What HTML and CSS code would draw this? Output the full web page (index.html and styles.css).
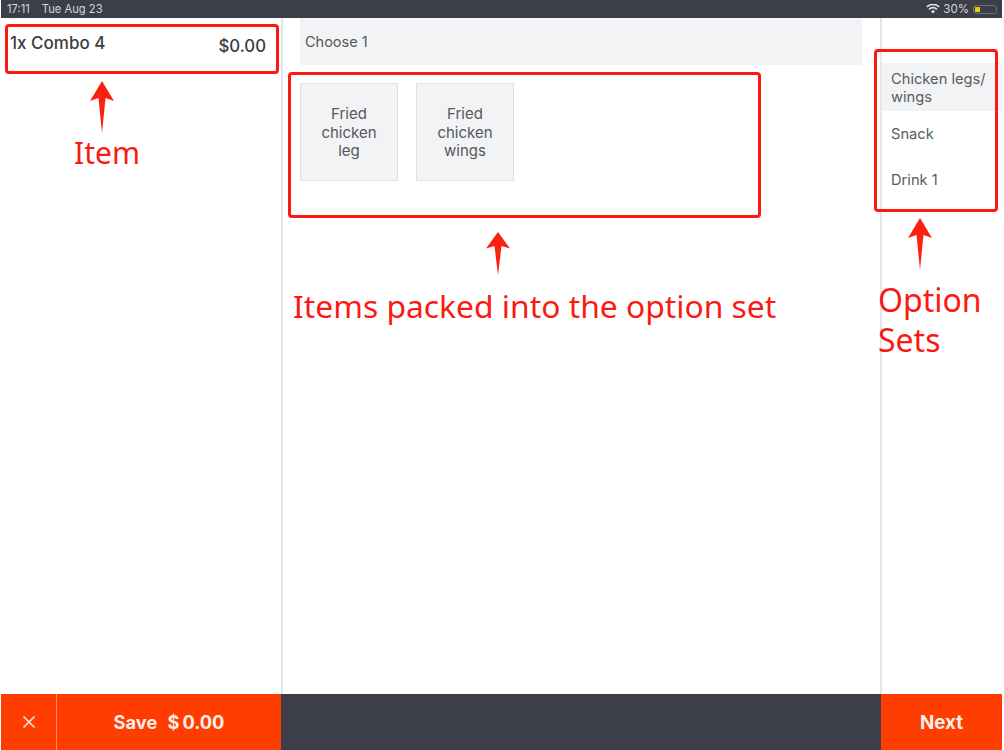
FILE: index.html
```html
<!DOCTYPE html>
<html lang="en">
<head>
<meta charset="utf-8">
<title>Combo 4</title>
<link rel="stylesheet" href="styles.css">
</head>
<body>
<div class="app">
  <header class="status">
    <div class="status-left"><span>17:11</span><span>Tue Aug 23</span></div>
    <div class="status-right">
      <svg class="wifi" viewBox="0 0 16 12" width="14" height="10"><path d="M8 11.5 5.6 8.8a3.4 3.4 0 0 1 4.8 0zM3.9 7.1 2.6 5.6a7.800 7.800 0 0 1 10.800 0l-1.300 1.500a5.800 5.800 0 0 0-8.200 0zM1.300 4.200 0 2.800a11.400 11.400 0 0 1 16 0l-1.300 1.400a9.500 9.500 0 0 0-13.400 0z" fill="#e4e5e8"/></svg>
      <span>30%</span>
      <span class="battery"><span class="battery-level"></span></span>
    </div>
  </header>
  <main class="columns">
    <section class="col-left">
      <div class="item-row"><span>1x Combo 4</span><span class="price">$0.00</span></div>
    </section>
    <section class="col-center">
      <div class="choose">Choose 1</div>
      <div class="tiles">
        <div class="tile">Fried<br>chicken<br>leg</div>
        <div class="tile">Fried<br>chicken<br>wings</div>
      </div>
    </section>
    <aside class="col-right">
      <div class="set set-active">Chicken legs/<br>wings</div>
      <div class="set">Snack</div>
      <div class="set">Drink 1</div>
    </aside>
  </main>
  <footer class="bar">
    <div class="bar-left">
      <button class="btn-close"><svg viewBox="0 0 14 14" width="14" height="14"><path d="M1.500 1.500 12.500 12.500M12.500 1.500 1.500 12.500" stroke="#fbe3da" stroke-width="1.700" fill="none"/></svg></button>
      <button class="btn-save"><span>Save</span><span class="amount"><span class="currency">$</span>0.00</span></button>
    </div>
    <div class="bar-mid"></div>
    <button class="btn-next">Next</button>
  </footer>
</div>

<div class="box box-item"></div>
<div class="box box-tiles"></div>
<div class="box box-sets"></div>

<svg class="arrow arrow-item" viewBox="0 0 24 52" preserveAspectRatio="none"><path d="M12 0 24 20 15.500 17 12 52 8.500 17 0 20z" fill="#fb2010"/></svg>
<svg class="arrow arrow-tiles" viewBox="0 0 24 52" preserveAspectRatio="none"><path d="M12 0 24 20 15.500 17 12 52 8.500 17 0 20z" fill="#fb2010"/></svg>
<svg class="arrow arrow-sets" viewBox="0 0 24 52" preserveAspectRatio="none"><path d="M12 0 24 20 15.500 17 12 52 8.500 17 0 20z" fill="#fb2010"/></svg>

<div class="note note-item">Item</div>
<div class="note note-tiles">Items packed into the option set</div>
<div class="note note-sets">Option<br>Sets</div>
</body>
</html>
```
FILE: styles.css
```css
* { box-sizing: border-box; }
html, body { margin: 0; padding: 0; height: 100%; background: #fff; overflow: hidden; }
body { width: 1004px; height: 750px; position: relative; font-family: Inter, "Liberation Sans", sans-serif; color: #4a4c52; }
.app { display: flex; flex-direction: column; width: 1001px; height: 750px; margin-left: 1px; }
.status { height: 18px; flex: none; background: #3c3f49; color: #d5d6da; font-size: 11.200px; display: flex; justify-content: space-between; align-items: center; padding: 0 5px 0 6px; }
.status-left { display: flex; gap: 12px; }
.status-right { display: flex; align-items: center; gap: 3px; font-size: 11.500px; }
.battery { width: 24px; height: 9px; border: 1px solid #6d6f78; border-radius: 3px; padding: 1px; display: block; margin-left: 1px; }
.battery-level { display: block; width: 5px; height: 5px; background: #f5c800; }
.columns { flex: 1; display: flex; min-height: 0; }
.col-left { width: 282px; flex: none; border-right: 2px solid #e6e7e9; padding: 16px 15px 0 9px; }
.item-row { display: flex; justify-content: space-between; font-size: 17px; font-weight: 500; color: #3c3e44; line-height: 18px; }
.price { font-size: 16.800px; padding-top: 3px; }
.col-center { flex: 1; padding: 0 18px 0 17px; }
.choose { height: 47px; background: #f2f3f5; font-size: 14.500px; color: #55575c; padding: 16px 0 0 5px; line-height: 16px; }
.tiles { display: flex; gap: 18px; margin-top: 18px; }
.tile { width: 98px; height: 98px; background: #f2f3f5; border: 1px solid #dfe2e6; font-size: 15px; line-height: 18.500px; color: #55575c; text-align: center; padding-top: 21px; }
.col-right { width: 122px; flex: none; border-left: 2px solid #e6e7e9; padding-top: 45px; }
.set { height: 46px; padding: 0 0 0 9px; font-size: 14.700px; line-height: 18px; color: #5a5c61; display: flex; align-items: center; }
.set-active { height: 48px; background: #f2f3f5; padding-top: 2px; }
.bar { height: 56px; flex: none; display: flex; background: #3c3f49; }
.bar-left { width: 280px; flex: none; display: flex; background: #ff3d00; }
button { border: 0; margin: 0; padding: 0; background: none; font-family: inherit; color: #fdeee8; font-weight: 700; font-size: 18.300px; }
.btn-close { width: 56px; flex: none; border-right: 1px solid #ff8a66; display: flex; align-items: center; justify-content: center; }
.btn-save { flex: 1; display: flex; align-items: center; justify-content: center; gap: 10px; }
.currency { margin-right: 3px; }
.bar-mid { flex: 1; }
.btn-next { width: 121px; flex: none; background: #ff3d00; font-size: 18.800px; }
.box { position: absolute; border: 3px solid #fb1a12; border-radius: 4px; }
.box-item { left: 5px; top: 24px; width: 274px; height: 50px; }
.box-tiles { left: 288px; top: 72px; width: 473px; height: 146px; }
.box-sets { left: 874px; top: 49px; width: 124px; height: 163px; }
.arrow { position: absolute; width: 24px; height: 52px; }
.arrow-item { left: 90px; top: 81px; }
.arrow-tiles { left: 486px; top: 232px; height: 43px; }
.arrow-sets { left: 908px; top: 218px; }
.note { position: absolute; color: #fb1a12; font-family: "Noto Sans", "Open Sans", sans-serif; font-size: 32px; line-height: 40px; white-space: nowrap; }
.note-item { left: 74px; top: 133px; font-size: 30px; }
.note-tiles { left: 293px; top: 286px; font-size: 31.800px; }
.note-sets { left: 878px; top: 280px; }
```
